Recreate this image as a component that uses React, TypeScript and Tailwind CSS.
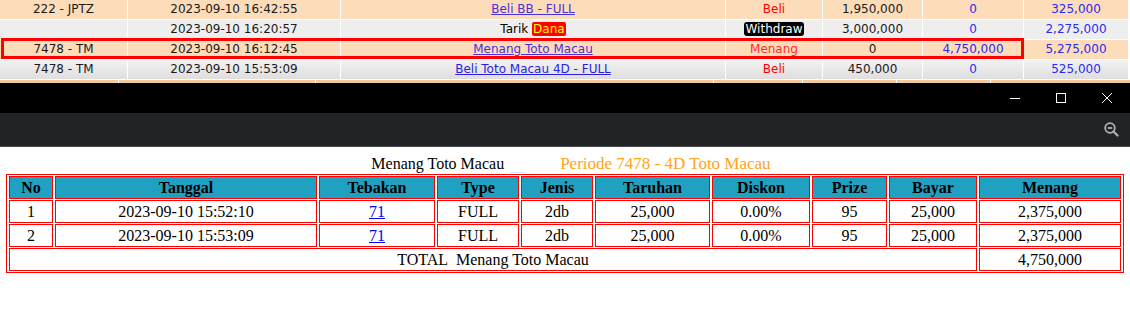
import React from 'react';

// Top ledger rows (partially visible list behind the popup)
type Row = {
  kode: string;
  tanggal: string;
  ket: React.ReactNode;
  status: React.ReactNode;
  debet: string;
  kredit: string;
  saldo: string;
  bg: string;
};

const PEACH = 'bg-[#fddcb9]';

const rows: Row[] = [
  {
    kode: '222 - JPTZ',
    tanggal: '2023-09-10 16:42:55',
    ket: <a className="text-[#4b2fd9] underline">Beli BB - FULL</a>,
    status: <span className="text-[#ff0000]">Beli</span>,
    debet: '1,950,000',
    kredit: '0',
    saldo: '325,000',
    bg: PEACH,
  },
  {
    kode: '',
    tanggal: '2023-09-10 16:20:57',
    ket: (
      <span className="text-black">
        Tarik <span className="rounded-[2px] bg-[#ff0000] px-px text-[#ffff00]">Dana</span>
      </span>
    ),
    status: <span className="rounded-[3px] bg-black px-[2px] text-white">Withdraw</span>,
    debet: '3,000,000',
    kredit: '0',
    saldo: '2,275,000',
    bg: 'bg-[#eeeeee]',
  },
  {
    kode: '7478 - TM',
    tanggal: '2023-09-10 16:12:45',
    ket: <a className="text-[#4b2fd9] underline">Menang Toto Macau</a>,
    status: <span className="text-[#ff2d2d]">Menang</span>,
    debet: '0',
    kredit: '4,750,000',
    saldo: '5,275,000',
    bg: PEACH,
  },
  {
    kode: '7478 - TM',
    tanggal: '2023-09-10 15:53:09',
    ket: <a className="text-[#2a1fe0] underline">Beli Toto Macau 4D - FULL</a>,
    status: <span className="text-[#ff0000]">Beli</span>,
    debet: '450,000',
    kredit: '0',
    saldo: '525,000',
    bg: 'bg-gradient-to-b from-[#f2f2f2] to-[#dedede]',
  },
];

const detail = [
  { no: '1', tanggal: '2023-09-10 15:52:10' },
  { no: '2', tanggal: '2023-09-10 15:53:09' },
];

const Ledger = () => (
  <div className="relative bg-white" style={{ fontFamily: '"DejaVu Sans", sans-serif' }}>
    <div className="grid grid-cols-[127px_212px_384px_96px_99px_100px_104px] gap-px text-[12px] leading-[19px] text-[#1a1a1a]">
      {rows.map((r, i) => (
        <React.Fragment key={i}>
          <div className={`${r.bg} h-[19px] text-center`}>{r.kode}</div>
          <div className={`${r.bg} h-[19px] text-center`}>{r.tanggal}</div>
          <div className={`${r.bg} h-[19px] text-center`}>{r.ket}</div>
          <div className={`${r.bg} h-[19px] text-center`}>{r.status}</div>
          <div className={`${r.bg} h-[19px] text-center`}>{r.debet}</div>
          <div className={`${r.bg} h-[19px] text-center text-[#2a2af0]`}>{r.kredit}</div>
          <div className={`${r.bg} h-[19px] text-center text-[#2a2af0]`}>{r.saldo}</div>
        </React.Fragment>
      ))}
    </div>
    {/* next row, cut off by the popup */}
    <div className="mt-px grid h-[3px] grid-cols-[118px_196px_397px_88px_93px_93px_1fr] gap-px">
      {Array.from({ length: 7 }).map((_, i) => (
        <div key={i} className="bg-[#f3c9a0]" />
      ))}
    </div>
    {/* highlighted row */}
    <div className="absolute left-px top-[38px] h-[21px] w-[1023px] border-[3px] border-[#ff0000]" />
  </div>
);

const TitleBar = () => (
  <div className="flex h-[30px] justify-end bg-black">
    <button className="flex w-[46px] items-center justify-center">
      <svg width="10" height="10" viewBox="0 0 10 10">
        <path d="M0 5.5h10" stroke="#fff" strokeWidth="1" />
      </svg>
    </button>
    <button className="flex w-[46px] items-center justify-center">
      <svg width="10" height="10" viewBox="0 0 10 10">
        <rect x="0.5" y="0.5" width="9" height="9" fill="none" stroke="#fff" strokeWidth="1" />
      </svg>
    </button>
    <button className="flex w-[46px] items-center justify-center">
      <svg width="10" height="10" viewBox="0 0 10 10">
        <path d="M0 0L10 10M10 0L0 10" stroke="#fff" strokeWidth="1" />
      </svg>
    </button>
  </div>
);

const Toolbar = () => (
  <div className="flex h-[34px] items-center justify-end border-b border-[#4a4b4e] bg-[#222327] pr-[11px]">
    <svg width="15" height="15" viewBox="0 0 15 15">
      <circle cx="6" cy="6" r="4.8" fill="none" stroke="#b3b3b3" strokeWidth="1.8" />
      <path d="M3.8 6h4.4" stroke="#b3b3b3" strokeWidth="1.8" />
      <path d="M9.5 9.5L13.5 13.5" stroke="#b3b3b3" strokeWidth="2.2" strokeLinecap="round" />
    </svg>
  </div>
);

const th = 'border border-[#ff0000] bg-[#21a1c1] p-0 font-bold h-[23px] leading-[21px]';
const td = 'border border-[#ff0000] p-0 h-[23px] leading-[21px] text-center';

const Detail = () => (
  <div className="bg-white pb-[56px] text-black" style={{ fontFamily: '"Liberation Serif", serif' }}>
    <div className="mt-[7px] flex h-[19px] items-end justify-center pl-[12px] text-[16px] leading-[18px]">
      <span>Menang Toto Macau</span>
      <span className="ml-[6px] h-[16px] w-[15px] border-b border-[#c8eefc]" />
      <span className="ml-[35px] text-[17px] text-[#ffa31a]">Periode 7478 - 4D Toto Macau</span>
    </div>
    <table className="ml-[6px] mt-[1px] w-[1118px] table-fixed border-separate border-spacing-x-[2px] border-spacing-y-[1px] border border-[#ff0000] text-[16px]">
      <thead>
        <tr>
          <th className={`${th} w-[44px]`}>No</th>
          <th className={`${th} w-[262px]`}>Tanggal</th>
          <th className={`${th} w-[116px]`}>Tebakan</th>
          <th className={`${th} w-[82px]`}>Type</th>
          <th className={`${th} w-[72px]`}>Jenis</th>
          <th className={`${th} w-[115px]`}>Taruhan</th>
          <th className={`${th} w-[98px]`}>Diskon</th>
          <th className={`${th} w-[75px]`}>Prize</th>
          <th className={`${th} w-[88px]`}>Bayar</th>
          <th className={`${th} w-[142px]`}>Menang</th>
        </tr>
      </thead>
      <tbody>
        {detail.map((d) => (
          <tr key={d.no}>
            <td className={td}>{d.no}</td>
            <td className={td}>{d.tanggal}</td>
            <td className={td}>
              <a className="text-[#0000ee] underline">71</a>
            </td>
            <td className={td}>FULL</td>
            <td className={td}>2db</td>
            <td className={td}>25,000</td>
            <td className={td}>0.00%</td>
            <td className={td}>95</td>
            <td className={td}>25,000</td>
            <td className={td}>2,375,000</td>
          </tr>
        ))}
        <tr>
          <td className={td} colSpan={9}>
            TOTAL&nbsp; Menang Toto Macau
          </td>
          <td className={td}>4,750,000</td>
        </tr>
      </tbody>
    </table>
  </div>
);

export default function App() {
  return (
    <div className="h-[327px] w-[1130px] overflow-hidden bg-white">
      <Ledger />
      <TitleBar />
      <Toolbar />
      <Detail />
    </div>
  );
}
